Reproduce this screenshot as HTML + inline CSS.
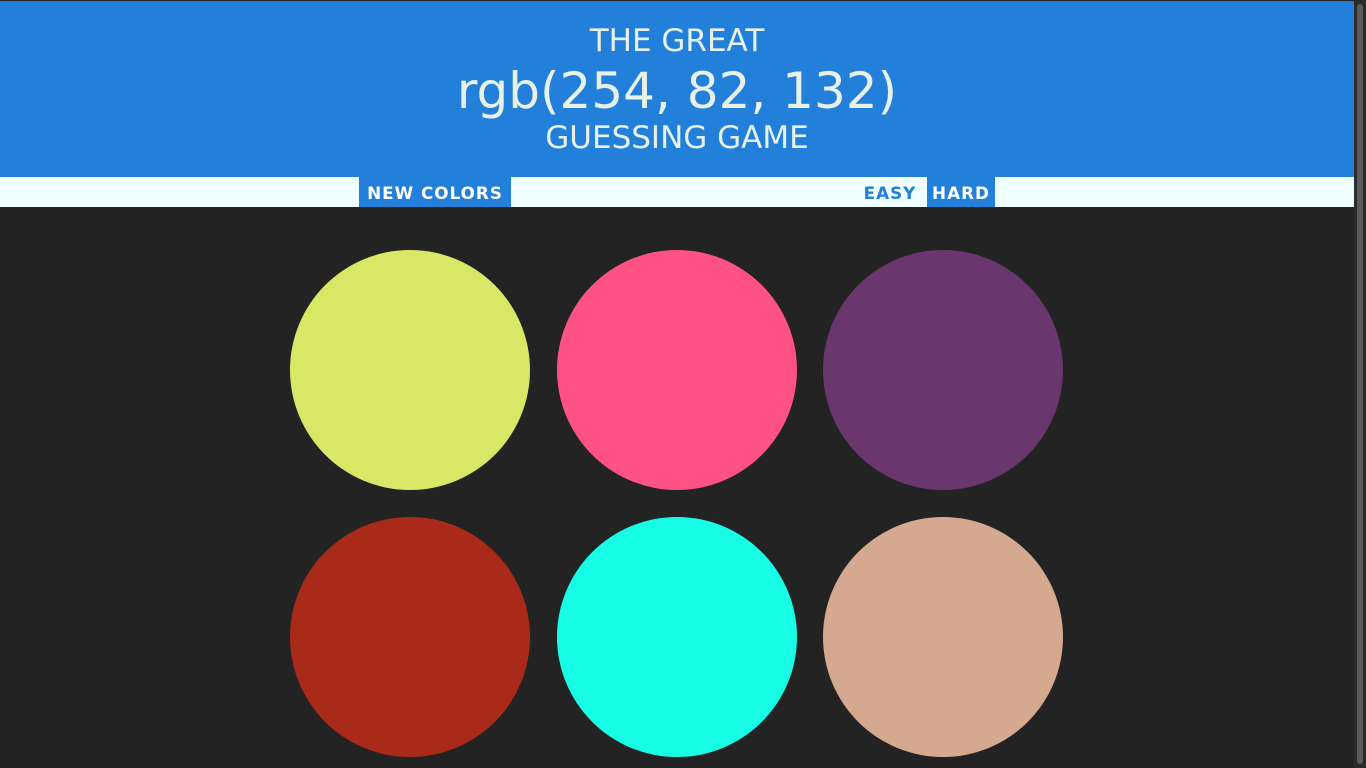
<!DOCTYPE html>
<html><head><style>
html,body{margin:0;padding:0;}
body{width:1366px;height:768px;background:#232323;position:relative;overflow:hidden;font-family:"DejaVu Sans","Liberation Sans",sans-serif;}
#top{position:absolute;left:0;top:0;width:1354px;height:1px;background:#222;}
#hdr{position:absolute;left:0;top:1px;width:1354px;height:176px;background:#2380da;color:#e8f1e6;}
.t{position:absolute;left:0;width:1354px;text-align:center;white-space:nowrap;line-height:1;}
#nav{position:absolute;left:0;top:177px;width:1354px;height:30px;background:#f0ffff;}
.b{position:absolute;top:0;height:30px;line-height:32px;font-weight:bold;font-size:16.8px;letter-spacing:1px;color:#2380da;text-align:center;}
.c{position:absolute;width:240px;height:240px;border-radius:50%;}
#sb{position:absolute;left:1354px;top:0;width:12px;height:768px;background:#2b2b2b;}
#th{position:absolute;left:1357px;top:4px;width:6px;height:760px;background:#5a5a5a;border-radius:3px;}
</style></head><body>
<div id="top"></div>
<div id="hdr">
<div class="t" style="top:25px;font-size:31px;">THE GREAT</div>
<div class="t" style="top:65px;font-size:50px;">rgb(254, 82, 132)</div>
<div class="t" style="top:122px;font-size:31px;">GUESSING GAME</div>
</div>
<div id="nav">
<div class="b" style="left:359px;width:152px;background:#2380da;color:#fff;">NEW COLORS</div>
<div class="b" style="left:858px;width:64px;">EASY</div>
<div class="b" style="left:927px;width:68px;background:#2380da;color:#fff;">HARD</div>
</div>
<div class="c" style="left:290px;top:250px;background:#d8e866;"></div>
<div class="c" style="left:557px;top:250px;background:#fe5284;"></div>
<div class="c" style="left:823px;top:250px;background:#69366d;"></div>
<div class="c" style="left:290px;top:517px;background:#aa2a19;"></div>
<div class="c" style="left:557px;top:517px;background:#17fce5;"></div>
<div class="c" style="left:823px;top:517px;background:#d5a890;"></div>
<div id="sb"></div><div id="th"></div>
</body></html>
